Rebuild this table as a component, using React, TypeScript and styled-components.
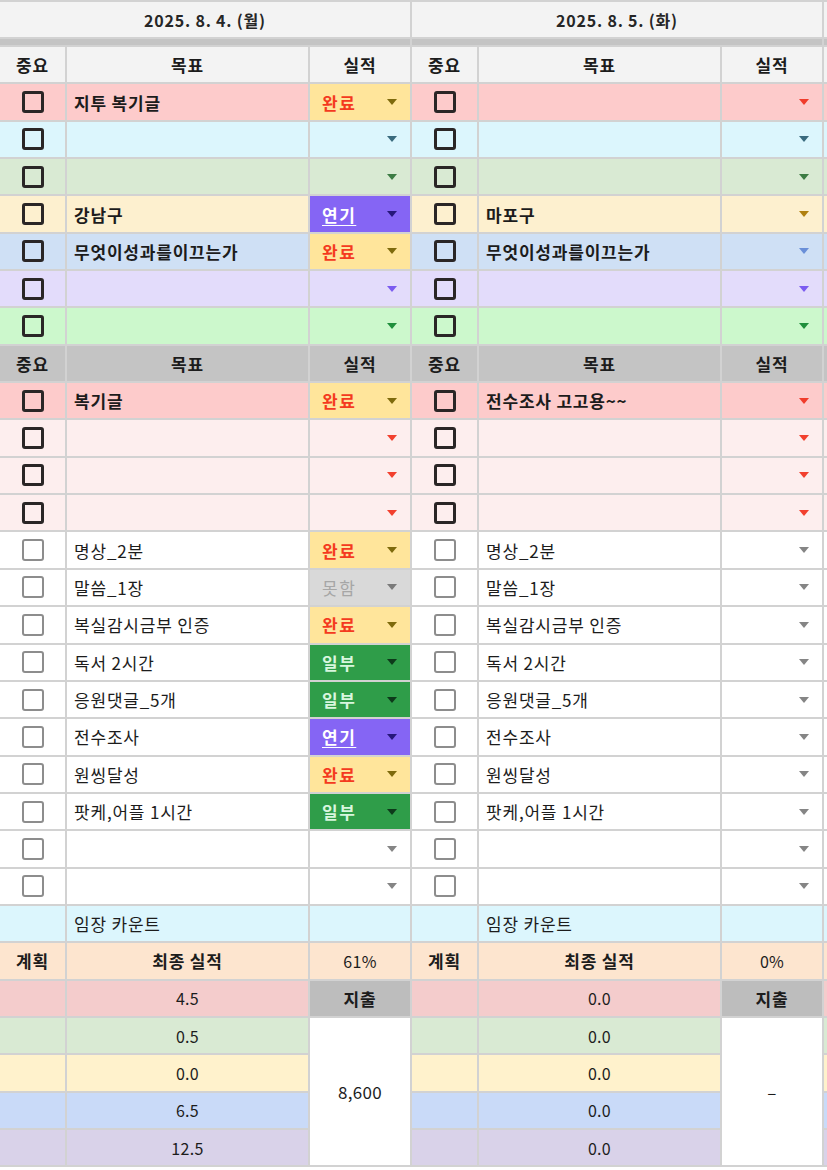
import styled, { createGlobalStyle } from "styled-components";

const GlobalStyle = createGlobalStyle`
  body {
    margin: 0;
    background: #ffffff;
    overflow: hidden;
    font-family: "Noto Sans CJK KR", "Noto Sans", sans-serif;
    color: #1c1c1c;
  }
`;

const Page = styled.div`
  width: 827px;
  height: 1170px;
  overflow: hidden;
`;

const Sheet = styled.div`
  display: flex;
  gap: 2px;
  width: max-content;
  padding: 2px 0;
  background: #d2d2d2;
`;

const DayPanel = styled.div`
  display: grid;
  grid-template-columns: 65px 241px 100px;
  grid-template-rows: 35px 6px;
  grid-auto-rows: 35.35px;
  gap: 2px;
  width: 410px;
`;

const DateHeader = styled.div`
  grid-column: 1 / -1;
  display: flex;
  align-items: center;
  justify-content: center;
  background: #f3f3f3;
  font-size: 16px;
  font-weight: 700;
  letter-spacing: 0.8px;
  color: #262626;
`;

const Band = styled.div`
  grid-column: 1 / -1;
  background: #c4c4c4;
`;

const Cell = styled.div<{ $bg: string; $align?: "left" | "center"; $bold?: boolean; $num?: boolean }>`
  display: flex;
  align-items: center;
  justify-content: ${(p) => (p.$align === "left" ? "flex-start" : "center")};
  padding: 0 ${(p) => (p.$align === "left" ? "7px" : "0")};
  background: ${(p) => p.$bg};
  font-size: ${(p) => (p.$num ? "16px" : "17px")};
  letter-spacing: ${(p) => (p.$num ? "0.3px" : "0.8px")};
  font-weight: ${(p) => (p.$bold ? 700 : 400)};
  white-space: nowrap;
  overflow: hidden;
`;

const Merged = styled(Cell)`
  grid-row: span 4;
  font-size: 17px;
`;

const Check = styled.span<{ $dark: boolean }>`
  box-sizing: border-box;
  width: 22px;
  height: 22px;
  border-radius: 3px;
  border: ${(p) => (p.$dark ? "3px solid #2a2626" : "2.5px solid #8d8d8d")};
`;

const StatusCell = styled.div<{ $bg: string }>`
  display: flex;
  align-items: center;
  justify-content: space-between;
  padding: 0 13px 0 12px;
  background: ${(p) => p.$bg};
  font-size: 17px;
  letter-spacing: 1.5px;
`;

const StatusText = styled.span<{ $color: string; $underline?: boolean; $light?: boolean }>`
  color: ${(p) => p.$color};
  text-decoration: ${(p) => (p.$underline ? "underline" : "none")};
  text-underline-offset: 3px;
  font-weight: ${(p) => (p.$light ? 400 : 700)};
`;

const Arrow = styled.span<{ $color: string }>`
  margin-left: auto;
  width: 0;
  height: 0;
  border-left: 5.5px solid transparent;
  border-right: 5.5px solid transparent;
  border-top: 6px solid ${(p) => p.$color};
`;

type Status = "" | "완료" | "연기" | "일부" | "못함";

const statusStyle: Record<Exclude<Status, "">, { bg: string; text: string; arrow: string; underline?: boolean; light?: boolean }> = {
  완료: { bg: "#ffe59b", text: "#f43a1e", arrow: "#7e6a0c" },
  연기: { bg: "#8565f4", text: "#ffffff", arrow: "#26177a", underline: true },
  일부: { bg: "#2f9d49", text: "#d8f6de", arrow: "#0d3a1a" },
  못함: { bg: "#d9d9d9", text: "#a6a6a6", arrow: "#7a7a7a", light: true },
};

type Tone = { bg: string; arrow: string; dark: boolean; bold: boolean };

const topTones: Tone[] = [
  { bg: "#fdcbcb", arrow: "#f03c2b", dark: true, bold: true },
  { bg: "#dcf6fd", arrow: "#3a6b7e", dark: true, bold: true },
  { bg: "#d9ead3", arrow: "#3d7c44", dark: true, bold: true },
  { bg: "#fdf0cf", arrow: "#b0800f", dark: true, bold: true },
  { bg: "#cfe0f5", arrow: "#6a8fd8", dark: true, bold: true },
  { bg: "#e3dcfb", arrow: "#7b5cf0", dark: true, bold: true },
  { bg: "#ccf8cc", arrow: "#1f8f3c", dark: true, bold: true },
];

const pinkTones: Tone[] = [
  { bg: "#fdcbcb", arrow: "#f03c2b", dark: true, bold: true },
  { bg: "#fdeeee", arrow: "#f2402e", dark: true, bold: true },
  { bg: "#fdeeee", arrow: "#f2402e", dark: true, bold: true },
  { bg: "#fdeeee", arrow: "#f2402e", dark: true, bold: true },
];

const whiteTone: Tone = { bg: "#ffffff", arrow: "#858585", dark: false, bold: false };

const summaryColors = ["#f4cccc", "#d9ead3", "#fff2cc", "#c9daf8", "#d9d2e9"];

type Goal = [string, Status];

type Day = {
  date: string;
  labels: boolean;
  top: Goal[];
  pink: Goal[];
  white: Goal[];
  rate: string;
  scores: string[];
  spend: string;
};

const routine = [
  "명상_2분",
  "말씀_1장",
  "복실감시금부 인증",
  "독서 2시간",
  "응원댓글_5개",
  "전수조사",
  "원씽달성",
  "팟케,어플 1시간",
  "",
  "",
];

const blank = (n: number): Goal[] => Array.from({ length: n }, (): Goal => ["", ""]);

const days: Day[] = [
  {
    date: "2025. 8. 4. (월)",
    labels: true,
    top: [
      ["지투 복기글", "완료"],
      ["", ""],
      ["", ""],
      ["강남구", "연기"],
      ["무엇이성과를이끄는가", "완료"],
      ["", ""],
      ["", ""],
    ],
    pink: [["복기글", "완료"], ...blank(3)],
    white: routine.map((g, i): Goal => [
      g,
      (["완료", "못함", "완료", "일부", "일부", "연기", "완료", "일부", "", ""] as Status[])[i],
    ]),
    rate: "61%",
    scores: ["4.5", "0.5", "0.0", "6.5", "12.5"],
    spend: "8,600",
  },
  {
    date: "2025. 8. 5. (화)",
    labels: true,
    top: [
      ["", ""],
      ["", ""],
      ["", ""],
      ["마포구", ""],
      ["무엇이성과를이끄는가", ""],
      ["", ""],
      ["", ""],
    ],
    pink: [["전수조사 고고용~~", ""], ...blank(3)],
    white: routine.map((g): Goal => [g, ""]),
    rate: "0%",
    scores: ["0.0", "0.0", "0.0", "0.0", "0.0"],
    spend: "–",
  },
  {
    // next day, only a sliver of it shows at the right edge
    date: "",
    labels: false,
    top: blank(7),
    pink: blank(4),
    white: blank(10),
    rate: "",
    scores: ["", "", "", "", ""],
    spend: "",
  },
];

const ColumnHeader = ({ bg, labels }: { bg: string; labels: boolean }) => (
  <>
    <Cell $bg={bg} $bold>{labels && "중요"}</Cell>
    <Cell $bg={bg} $bold>{labels && "목표"}</Cell>
    <Cell $bg={bg} $bold>{labels && "실적"}</Cell>
  </>
);

const GoalRow = ({ goal, tone }: { goal: Goal; tone: Tone }) => {
  const [text, status] = goal;
  const chip = status ? statusStyle[status] : null;
  return (
    <>
      <Cell $bg={tone.bg}>
        <Check $dark={tone.dark} />
      </Cell>
      <Cell $bg={tone.bg} $align="left" $bold={tone.bold}>
        {text}
      </Cell>
      <StatusCell $bg={chip ? chip.bg : tone.bg}>
        {chip && (
          <StatusText $color={chip.text} $underline={chip.underline} $light={chip.light}>
            {status}
          </StatusText>
        )}
        <Arrow $color={chip ? chip.arrow : tone.arrow} />
      </StatusCell>
    </>
  );
};

const ScoreRow = ({ index, score, spend, labels }: { index: number; score: string; spend: string; labels: boolean }) => (
  <>
    <Cell $bg={summaryColors[index]} />
    <Cell $bg={summaryColors[index]} $num>
      {score}
    </Cell>
    {index === 0 && (
      <Cell $bg="#bdbdbd" $bold>
        {labels && "지출"}
      </Cell>
    )}
    {index === 1 && (
      <Merged $bg="#ffffff" $num>
        {spend}
      </Merged>
    )}
  </>
);

const DayColumn = ({ day }: { day: Day }) => (
  <DayPanel>
    <DateHeader>{day.date}</DateHeader>
    <Band />
    <ColumnHeader bg="#f3f3f3" labels={day.labels} />
    {day.top.map((g, i) => (
      <GoalRow key={`t${i}`} goal={g} tone={topTones[i]} />
    ))}
    <ColumnHeader bg="#c4c4c4" labels={day.labels} />
    {day.pink.map((g, i) => (
      <GoalRow key={`p${i}`} goal={g} tone={pinkTones[i]} />
    ))}
    {day.white.map((g, i) => (
      <GoalRow key={`w${i}`} goal={g} tone={whiteTone} />
    ))}

    <Cell $bg="#dcf6fd" />
    <Cell $bg="#dcf6fd" $align="left">
      {day.labels && "임장 카운트"}
    </Cell>
    <Cell $bg="#dcf6fd" />

    <Cell $bg="#fde5cf" $bold>
      {day.labels && "계획"}
    </Cell>
    <Cell $bg="#fde5cf" $bold>
      {day.labels && "최종 실적"}
    </Cell>
    <Cell $bg="#fde5cf" $num>
      {day.rate}
    </Cell>

    {day.scores.map((s, i) => (
      <ScoreRow key={`s${i}`} index={i} score={s} spend={day.spend} labels={day.labels} />
    ))}
  </DayPanel>
);

const App = () => {
  return (
    <Page>
      <GlobalStyle />
      <Sheet>
        {days.map((d, i) => (
          <DayColumn key={i} day={d} />
        ))}
      </Sheet>
    </Page>
  );
};

export default App;
